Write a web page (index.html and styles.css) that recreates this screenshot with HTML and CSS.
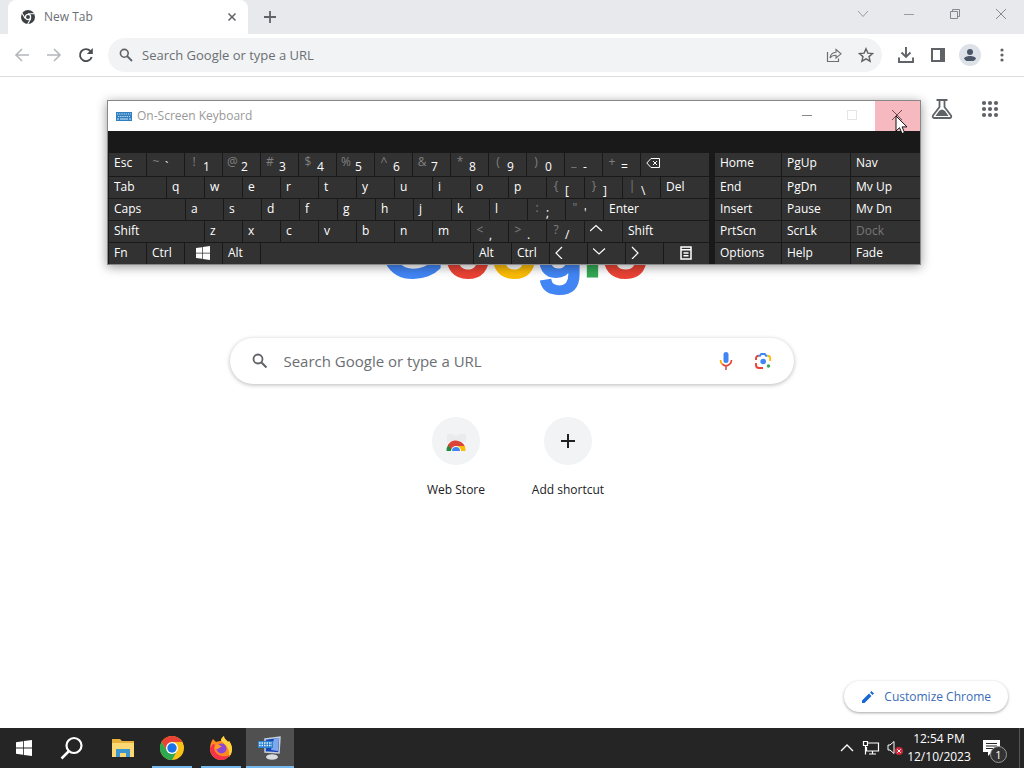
FILE: index.html
```html
<!DOCTYPE html>
<html lang="en">
<head>
    <meta charset="UTF-8">
    <meta name="viewport" content="width=device-width, initial-scale=1.0">
    <title>New Tab</title>
    <link rel="stylesheet" href="styles.css">
</head>
<body>
    <div class="browser">
        <div class="tab-strip">
            <div class="tab">
                <svg width="14" height="14" viewBox="0 0 14 14"><circle cx="7" cy="7" r="7" fill="#3c4043"/><circle cx="7" cy="7" r="2.6" fill="#3c4043" stroke="#fff" stroke-width="1.3"/><path d="M7 3.8h6.3M4.2 8.6L1.1 3.2M9.8 8.6L6.7 14" stroke="#fff" stroke-width="1.1"/></svg>
                <span class="tab-title">New Tab</span>
                <button class="icon-button tab-close" aria-label="Close tab">
                    <svg width="10" height="10" viewBox="0 0 10 10"><path d="M1.5 1.5l7 7M8.5 1.5l-7 7" stroke="#5f6368" stroke-width="1.5"/></svg>
                </button>
            </div>
            <button class="icon-button new-tab" aria-label="New tab">
                <svg width="12" height="12" viewBox="0 0 12 12"><path d="M6 0v12M0 6h12" stroke="#5f6368" stroke-width="1.8"/></svg>
            </button>
            <div class="window-buttons">
                <button class="icon-button" aria-label="Search tabs"><svg width="12" height="12" viewBox="0 0 12 12"><path d="M1 2l5 5.5L11 2" fill="none" stroke="#999ca0"/></svg></button>
                <button class="icon-button" aria-label="Minimize"><svg width="12" height="12" viewBox="0 0 12 12"><path d="M1 5.5h10" stroke="#999ca0"/></svg></button>
                <button class="icon-button" aria-label="Restore"><svg width="12" height="12" viewBox="0 0 12 12"><path d="M1.5 2.5h7v7h-7zM3.5 2.5v-2h7v7h-2" fill="none" stroke="#85888c"/></svg></button>
                <button class="icon-button" aria-label="Close"><svg width="12" height="12" viewBox="0 0 12 12"><path d="M1 0l10 10M11 0L1 10" stroke="#85888c"/></svg></button>
            </div>
        </div>

        <div class="toolbar">
            <div class="nav-buttons">
                <button class="icon-button" aria-label="Back"><svg width="16" height="16" viewBox="0 0 16 16"><path d="M15 8H2M8 2L2 8l6 6" fill="none" stroke="#b5b7ba" stroke-width="1.6"/></svg></button>
                <button class="icon-button" aria-label="Forward"><svg width="16" height="16" viewBox="0 0 16 16"><path d="M1 8h13M8 2l6 6-6 6" fill="none" stroke="#b5b7ba" stroke-width="1.6"/></svg></button>
                <button class="icon-button" aria-label="Reload"><svg width="16" height="16" viewBox="0 0 16 16"><path d="M13.7 10A6 6 0 1 1 12.4 4" fill="none" stroke="#4a4d51" stroke-width="1.9"/><path d="M14.8 1v6H8.8z" fill="#4a4d51"/></svg></button>
            </div>
            <div class="omnibox">
                <svg width="14" height="14" viewBox="0 0 14 14"><circle cx="5.3" cy="5.3" r="3.9" fill="none" stroke="#5f6368" stroke-width="1.6"/><path d="M8 8l5 5" stroke="#5f6368" stroke-width="1.8"/></svg>
                <input type="text" aria-label="Address bar" placeholder="Search Google or type a URL">
                <button class="icon-button" aria-label="Share"><svg width="16" height="16" viewBox="0 0 16 16"><path d="M1.5 5v9.5h11v-3" fill="none" stroke="#6b6f73" stroke-width="1.2"/><path d="M4 11C4.5 7.5 6.5 5.3 10 5.2V2.5L15 6.8l-5 4.2V8.3C7.5 8.3 5.5 9 4 11z" fill="none" stroke="#6b6f73" stroke-width="1.1"/></svg></button>
                <button class="icon-button" aria-label="Bookmark"><svg width="16" height="16" viewBox="0 0 16 16"><path d="M8 1.8l1.9 4.3 4.7.4-3.6 3.1 1.1 4.6L8 11.8l-4.1 2.4L5 9.6 1.4 6.5l4.7-.4z" fill="none" stroke="#5f6368" stroke-width="1.4"/></svg></button>
            </div>
            <div class="toolbar-actions">
                <button class="icon-button" aria-label="Downloads"><svg width="18" height="18" viewBox="0 0 18 18"><path d="M9 1v9M4.5 6.5L9 11l4.5-4.5M2 11.5V16h14v-4.5" fill="none" stroke="#5f6368" stroke-width="1.9"/></svg></button>
                <button class="icon-button" aria-label="Side panel"><svg width="14" height="14" viewBox="0 0 14 14"><path d="M0 0h14v14H0z" fill="#5f6368"/><path d="M2 2h7v10H2z" fill="#fff"/></svg></button>
                <button class="icon-button avatar" aria-label="Profile"><svg width="14" height="14" viewBox="0 0 14 14"><circle cx="7" cy="4" r="3" fill="#4b5568"/><path d="M1 13v-2c0-2 3-3 6-3s6 1 6 3v2z" fill="#4b5568"/></svg></button>
                <button class="icon-button" aria-label="Menu"><svg width="4" height="14" viewBox="0 0 4 14"><g fill="#5f6368"><circle cx="2" cy="2" r="1.6"/><circle cx="2" cy="7" r="1.6"/><circle cx="2" cy="12" r="1.6"/></g></svg></button>
            </div>
        </div>

        <div class="new-tab-page">
            <div class="page-tools">
                <button class="icon-button" aria-label="Labs"><svg width="22" height="22" viewBox="0 0 22 22"><path d="M5.5 2h11M8.5 2v7L2 17.5c-.8 1.3 0 2.5 1.5 2.5h15c1.5 0 2.3-1.2 1.5-2.5L13.5 9V2" fill="none" stroke="#5f6368" stroke-width="1.8"/><path d="M4.5 18l3.5-5c2-2 4-2 6 0l3.5 5z" fill="#5f6368"/></svg></button>
                <button class="icon-button" aria-label="Google apps"><svg width="18" height="18" viewBox="0 0 18 18"><g fill="#5f6368"><circle cx="3" cy="3" r="2.1"/><circle cx="9" cy="3" r="2.1"/><circle cx="15" cy="3" r="2.1"/><circle cx="3" cy="9" r="2.1"/><circle cx="9" cy="9" r="2.1"/><circle cx="15" cy="9" r="2.1"/><circle cx="3" cy="15" r="2.1"/><circle cx="9" cy="15" r="2.1"/><circle cx="15" cy="15" r="2.1"/></g></svg></button>
            </div>

            <div class="logo"><span class="blue">G</span><span class="red">o</span><span class="yellow">o</span><span class="blue">g</span><span class="green">l</span><span class="red">e</span></div>

            <div class="search-box">
                <svg width="16" height="16" viewBox="0 0 16 16"><circle cx="6" cy="6" r="4.5" fill="none" stroke="#5f6368" stroke-width="1.8"/><path d="M9.2 9.2l5.3 5.3" stroke="#5f6368" stroke-width="2"/></svg>
                <input type="text" aria-label="Search" placeholder="Search Google or type a URL">
                <button class="icon-button" aria-label="Voice search"><svg width="14" height="20" viewBox="0 0 14 20"><rect x="4.5" y="1" width="5" height="11" rx="2.5" fill="#4285f4"/><path d="M1.5 9c0 2 .8 3.3 1.8 4.2" fill="none" stroke="#f9ab00" stroke-width="1.7"/><path d="M3.3 13.2c2.2 1.9 5.2 1.9 7.4 0 1.1-1 1.8-2.3 1.8-4.2" fill="none" stroke="#ea4335" stroke-width="1.7"/><path d="M7 15v4" stroke="#c5665b" stroke-width="1.7"/></svg></button>
                <button class="icon-button" aria-label="Image search"><svg width="18" height="18" viewBox="0 0 18 18"><g fill="none" stroke-width="1.9"><path d="M2 8V6.5c0-1.8 1-2.7 2.7-2.7" stroke="#ea4335"/><path d="M4.5 3.8H6L7.2 2h3.6L12 3.8h1.5" stroke="#4285f4"/><path d="M13.5 3.8c1.8 0 2.7 1 2.7 2.7V9" stroke="#fbbc04"/><path d="M2 11v2c0 2 1 3 3 3h4" stroke="#ea4335"/></g><circle cx="9.2" cy="9.5" r="2.8" fill="#4285f4"/><circle cx="14.5" cy="14" r="1.7" fill="#34a853"/></svg></button>
            </div>

            <div class="shortcuts">
                <a class="shortcut" href="#">
                    <span class="shortcut-icon"><svg width="24" height="24" viewBox="0 0 24 24"><path d="M3 5h6l3 2 3-2h7v8H3z" fill="#e9ebed"/><path d="M2.5 22a9.5 9.5 0 0 1 3-7.5L9 19v3z" fill="#1e8e3e"/><path d="M4 16a9.5 9.5 0 0 1 17 2h-9l-5 2z" fill="#db4437"/><path d="M12 17h8.7c.6 1.3.8 3 .8 5H16z" fill="#fbbc04"/><path d="M7 22a5 5 0 0 1 10 0z" fill="#fff"/><path d="M8 22a4 4 0 0 1 8 0z" fill="#4285f4"/></svg></span>
                    <span>Web Store</span>
                </a>
                <a class="shortcut" href="#">
                    <span class="shortcut-icon"><svg width="14" height="14" viewBox="0 0 14 14"><path d="M7 0v14M0 7h14" stroke="#202124" stroke-width="2"/></svg></span>
                    <span>Add shortcut</span>
                </a>
            </div>

            <button class="customize">
                <svg width="14" height="14" viewBox="0 0 14 14"><path d="M1 10.5V13h2.5L10.5 6 8 3.5zM9 2.5L11.5 5 13 3.5 10.5 1z" fill="#1a67d2"/></svg>
                <span>Customize Chrome</span>
            </button>
        </div>
    </div>

    <div class="osk">
        <div class="osk-title">
            <svg width="16" height="9" viewBox="0 0 16 9"><path d="M0 0h16v9H0z" fill="#2f7fc0"/><path d="M1 2h14M2 4.5h12" stroke="#cfe6f7" stroke-width="1.2" stroke-dasharray="1.2 1"/><path d="M1 7h2M4 7h8M13 7h2" stroke="#cfe6f7" stroke-width="1.2"/></svg>
            <span>On-Screen Keyboard</span>
            <div class="osk-buttons">
                <button aria-label="Minimize"><svg width="12" height="12" viewBox="0 0 12 12"><path d="M0 5.5h10" stroke="#888"/></svg></button>
                <button aria-label="Maximize" disabled><svg width="12" height="12" viewBox="0 0 12 12"><path d="M.5.5h9v9h-9z" fill="none" stroke="#e4e4e4"/></svg></button>
                <button class="osk-close" aria-label="Close"><svg width="12" height="12" viewBox="0 0 12 12"><path d="M0 0l10 10M10 0L0 10" stroke="#6e4d52"/></svg></button>
            </div>
        </div>
        <div class="osk-body">
            <div class="keys">
                <div class="row">
                    <button class="key">Esc</button>
                    <button class="key dual"><i>~</i><b>`</b></button>
                    <button class="key dual"><i>!</i><b>1</b></button>
                    <button class="key dual"><i>@</i><b>2</b></button>
                    <button class="key dual"><i>#</i><b>3</b></button>
                    <button class="key dual"><i>$</i><b>4</b></button>
                    <button class="key dual"><i>%</i><b>5</b></button>
                    <button class="key dual"><i>^</i><b>6</b></button>
                    <button class="key dual"><i>&amp;</i><b>7</b></button>
                    <button class="key dual"><i>*</i><b>8</b></button>
                    <button class="key dual"><i>(</i><b>9</b></button>
                    <button class="key dual"><i>)</i><b>0</b></button>
                    <button class="key dual"><i>_</i><b>-</b></button>
                    <button class="key dual"><i>+</i><b>=</b></button>
                    <button class="key fill" aria-label="Backspace"><svg width="14" height="14" viewBox="0 0 14 14"><path d="M5 3.5h8.5v9H5L.8 8zM7 6l4 4M11 6l-4 4" fill="none" stroke="#fff"/></svg></button>
                </div>
                <div class="row">
                    <button class="key tab-key">Tab</button>
                    <button class="key">q</button>
                    <button class="key">w</button>
                    <button class="key">e</button>
                    <button class="key">r</button>
                    <button class="key">t</button>
                    <button class="key">y</button>
                    <button class="key">u</button>
                    <button class="key">i</button>
                    <button class="key">o</button>
                    <button class="key">p</button>
                    <button class="key dual"><i>{</i><b>[</b></button>
                    <button class="key dual"><i>}</i><b>]</b></button>
                    <button class="key dual"><i>|</i><b>\</b></button>
                    <button class="key fill">Del</button>
                </div>
                <div class="row">
                    <button class="key caps-key">Caps</button>
                    <button class="key">a</button>
                    <button class="key">s</button>
                    <button class="key">d</button>
                    <button class="key">f</button>
                    <button class="key">g</button>
                    <button class="key">h</button>
                    <button class="key">j</button>
                    <button class="key">k</button>
                    <button class="key">l</button>
                    <button class="key dual"><i>:</i><b>;</b></button>
                    <button class="key dual"><i>"</i><b>'</b></button>
                    <button class="key fill">Enter</button>
                </div>
                <div class="row">
                    <button class="key shift-key">Shift</button>
                    <button class="key">z</button>
                    <button class="key">x</button>
                    <button class="key">c</button>
                    <button class="key">v</button>
                    <button class="key">b</button>
                    <button class="key">n</button>
                    <button class="key">m</button>
                    <button class="key dual"><i>&lt;</i><b>,</b></button>
                    <button class="key dual"><i>&gt;</i><b>.</b></button>
                    <button class="key dual"><i>?</i><b>/</b></button>
                    <button class="key" aria-label="Up"><svg width="14" height="14" viewBox="0 0 14 14"><path d="M0 8l6-5.5L12 8" fill="none" stroke="#fff" stroke-width="1.2"/></svg></button>
                    <button class="key fill">Shift</button>
                </div>
                <div class="row">
                    <button class="key">Fn</button>
                    <button class="key">Ctrl</button>
                    <button class="key icon-key" aria-label="Windows"><svg width="14" height="14" viewBox="0 0 14 14"><path d="M0 2l6-.8v5.5H0zM6.7 1.1L14 0v6.7H6.7zM0 7.4h6v5.4L0 12zM6.7 7.4H14V14l-7.3-1z" fill="#fff"/></svg></button>
                    <button class="key">Alt</button>
                    <button class="key fill" aria-label="Space"></button>
                    <button class="key">Alt</button>
                    <button class="key">Ctrl</button>
                    <button class="key" aria-label="Left"><svg width="14" height="14" viewBox="0 0 14 14"><path d="M7 2L1 8l6 6" fill="none" stroke="#fff" stroke-width="1.2"/></svg></button>
                    <button class="key" aria-label="Down"><svg width="14" height="14" viewBox="0 0 14 14"><path d="M0 3.5L6 9l6-5.5" fill="none" stroke="#fff" stroke-width="1.2"/></svg></button>
                    <button class="key" aria-label="Right"><svg width="14" height="14" viewBox="0 0 14 14"><path d="M1 2l6 6-6 6" fill="none" stroke="#fff" stroke-width="1.2"/></svg></button>
                    <button class="key icon-key menu-key" aria-label="Menu"><svg width="12" height="14" viewBox="0 0 12 14"><path d="M1 1h10v12H1zM1 3.7h10M3.5 7h5M3.5 9.8h5" fill="none" stroke="#fff" stroke-width="1.5"/></svg></button>
                </div>
            </div>
            <div class="side-keys">
                <button class="key">Home</button>
                <button class="key">PgUp</button>
                <button class="key">Nav</button>
                <button class="key">End</button>
                <button class="key">PgDn</button>
                <button class="key">Mv Up</button>
                <button class="key">Insert</button>
                <button class="key">Pause</button>
                <button class="key">Mv Dn</button>
                <button class="key">PrtScn</button>
                <button class="key">ScrLk</button>
                <button class="key" disabled>Dock</button>
                <button class="key">Options</button>
                <button class="key">Help</button>
                <button class="key">Fade</button>
            </div>
        </div>
        <svg class="cursor" width="13" height="20" viewBox="0 0 13 20"><path d="M1 1v15l3.5-3.3L7 18.5l2.5-1-2.4-5.6H12z" fill="#fff" stroke="#111"/></svg>
    </div>

    <div class="taskbar">
        <button class="task" aria-label="Start"><svg width="16" height="16" viewBox="0 0 16 16"><path d="M0 2.2l7-1v6.3H0zM7.8 1.1L16 0v7.5H7.8zM0 8.4h7v6.4l-7-1zM7.8 8.4H16V16l-8.2-1.1z" fill="#fff"/></svg></button>
        <button class="task" aria-label="Search"><svg width="24" height="24" viewBox="0 0 24 24"><circle cx="14" cy="9.5" r="7.5" fill="none" stroke="#fff" stroke-width="2.2"/><path d="M9 15l-7.5 7.5" stroke="#fff" stroke-width="2.5"/></svg></button>
        <div class="task-apps">
            <button class="task" aria-label="File Explorer"><svg width="22" height="20" viewBox="0 0 22 20"><path d="M0 1h8l2 2h12v16H0z" fill="#e8b13c"/><path d="M0 5h22v14H0z" fill="#fbd873"/><path d="M4 11h14v8h-4v-4H8v4H4z" fill="#3c96cf"/></svg></button>
            <button class="task running" aria-label="Chrome"><svg width="24" height="24" viewBox="0 0 24 24"><circle cx="12" cy="12" r="12" fill="#fbc116"/><path d="M1.6 6A12 12 0 0 1 22.4 6H12L7 15z" fill="#ea4335"/><path d="M1.6 6a12 12 0 0 0 10.4 18l5-9-5 3-5-3z" fill="#2da94f"/><circle cx="12" cy="12" r="6" fill="#fff"/><circle cx="12" cy="12" r="4.7" fill="#1a73e8"/></svg></button>
            <button class="task running" aria-label="Firefox"><svg width="24" height="24" viewBox="0 0 24 24"><path d="M4 3l3 3c2-1 4-1 5-1 0-2 1-4 3-5 0 3 3 4 4 6l1-1c2 3 3 5 3 8 0 6-5 11-11 11S1 19 1 13c0-4 1-7 3-10z" fill="#ff8a1f"/><path d="M15 0c0 3 3 4 4 6l1-1c2 3 3 5 3 8 0 3-1 6-3 8 1-6-1-11-8-16 0-2 1-4 3-5z" fill="#ffd33d"/><path d="M1 12c0 7 5 12 11 12 4 0 7-2 9-5-6 3-15 1-16-7l2-3-3-1z" fill="#f5324b"/><circle cx="12.5" cy="12.5" r="5" fill="#8b47d8"/><path d="M6 9c3-1 5 0 7 2-3 0-3 2-5 2s-3-2-2-4z" fill="#ff9a22"/></svg></button>
            <button class="task running active" aria-label="On-Screen Keyboard"><svg width="26" height="26" viewBox="0 0 26 26"><path d="M8 4l15-2-1 16-14-1z" fill="#1746b8"/><path d="M8 4l15-2-1 16-14-1z" fill="none" stroke="#c7cfdb" stroke-width="1.5"/><path d="M17 3.5l5-.5-1 13-7-1z" fill="#7fa8ea"/><ellipse cx="15" cy="22" rx="6" ry="2.8" fill="#d9dce0"/><path d="M1 6h15v7H1z" fill="#2d82cf"/><path d="M2 8h13M2 10.5h13" stroke="#e6f3ff" stroke-width="1.3" stroke-dasharray="1.5 1"/></svg></button>
        </div>
        <div class="tray">
            <button aria-label="Show hidden icons"><svg width="14" height="14" viewBox="0 0 14 14"><path d="M1 10l6-6 6 6" fill="none" stroke="#fff" stroke-width="1.3"/></svg></button>
            <button aria-label="Network"><svg width="18" height="16" viewBox="0 0 18 16"><path d="M6 3h10.5v8H4.5V7M10.5 11v3M7 14h7M1.5 1.5h4v4h-4zM3.5 5.5v9" fill="none" stroke="#fff" stroke-width="1.2"/></svg></button>
            <button aria-label="Volume"><svg width="16" height="16" viewBox="0 0 16 16"><path d="M1 5h2l4-3.5v12L3 10H1z" fill="none" stroke="#fff"/><circle cx="12" cy="11" r="4" fill="#d1273a"/><path d="M10.3 9.3l3.4 3.4M13.7 9.3l-3.4 3.4" stroke="#fff"/></svg></button>
            <div class="clock"><span>12:54 PM</span><span>12/10/2023</span></div>
            <button class="notifications" aria-label="Notifications">
                <svg width="17" height="16" viewBox="0 0 17 16"><path d="M0 0h17v12H9l-4 4v-4H0z" fill="#fff"/><path d="M3 3.5h11M3 6h11M3 8.5h7" stroke="#252525" stroke-width="1.1"/></svg>
                <span class="badge">1</span>
            </button>
            <span class="show-desktop"></span>
        </div>
    </div>
</body>
</html>
```
FILE: styles.css
```css
* {
    box-sizing: border-box;
}

body {
    margin: 0;
    height: 100vh;
    display: flex;
    flex-direction: column;
    font-family: "Open Sans", "Noto Sans", sans-serif;
    font-size: 12px;
    color: #202124;
    background-color: #fff;
    position: relative;
    overflow: hidden;
}

button {
    display: flex;
    align-items: center;
    justify-content: center;
    margin: 0;
    padding: 0;
    border: none;
    background: none;
    font: inherit;
    color: inherit;
}

svg {
    display: block;
    flex: none;
}

input {
    flex: 1;
    min-width: 0;
    padding: 0;
    border: none;
    outline: none;
    background: none;
    font: inherit;
}

input::placeholder {
    color: #6b6f73;
    opacity: 1;
}

.icon-button {
    width: 32px;
    height: 32px;
    flex: none;
}

/* browser */
.browser {
    flex: 1;
    display: flex;
    flex-direction: column;
}

.tab-strip {
    display: flex;
    height: 34px;
    padding-left: 8px;
    background-color: #e7e9ed;
}

.tab {
    display: flex;
    align-items: center;
    width: 240px;
    padding: 0 0 0 13px;
    background-color: #fff;
    border-radius: 8px 8px 0 0;
}

.tab-title {
    flex: 1;
    margin-left: 9px;
    font-size: 12px;
    line-height: 18px;
    color: #6b6f73;
}

.new-tab {
    margin-left: 6px;
    height: 34px;
}

.window-buttons {
    display: flex;
    margin-left: auto;
}

.window-buttons .icon-button {
    width: 46px;
    height: 30px;
}

.toolbar {
    display: flex;
    align-items: center;
    height: 43px;
    padding: 0 6px;
    border-bottom: 1px solid #dadce0;
}

.nav-buttons,
.toolbar-actions {
    display: flex;
}

.omnibox {
    flex: 1;
    display: flex;
    align-items: center;
    height: 34px;
    margin: 0 8px 0 6px;
    padding-left: 11px;
    border-radius: 17px;
    background-color: #f1f3f4;
    font-size: 13px;
}

.omnibox input {
    margin-left: 9px;
}

.avatar svg {
    box-sizing: content-box;
    padding: 4px;
    border-radius: 50%;
    background-color: #dde1e8;
}

/* new tab page */
.new-tab-page {
    flex: 1;
    display: flex;
    flex-direction: column;
    align-items: center;
}

.page-tools {
    align-self: flex-end;
    display: flex;
    gap: 16px;
    margin: 16px 18px 0 0;
}

.logo {
    height: 92px;
    margin-top: 77px;
    padding-left: 4px;
    font-family: "Liberation Sans", Arial, sans-serif;
    font-size: 83px;
    line-height: 92px;
    -webkit-text-stroke-width: 4px;
}

.blue {
    color: #4285f4;
}

.red {
    color: #ea4335;
}

.yellow {
    color: #fbbc05;
}

.green {
    color: #34a853;
}

.search-box {
    display: flex;
    align-items: center;
    width: 55%;
    height: 46px;
    margin-top: 44px;
    padding: 0 12px 0 22px;
    border-radius: 23px;
    box-shadow: 0 1px 4px rgba(32, 33, 36, 0.32);
    font-size: 15px;
}

.search-box input {
    margin-left: 15px;
}

.search-box .icon-button {
    width: 37px;
}

.shortcuts {
    display: flex;
    margin-top: 33px;
}

.shortcut {
    display: flex;
    flex-direction: column;
    align-items: center;
    gap: 17px;
    width: 112px;
    line-height: 16px;
    color: #202124;
    text-decoration: none;
}

.shortcut-icon {
    display: flex;
    align-items: center;
    justify-content: center;
    width: 48px;
    height: 48px;
    border-radius: 50%;
    background-color: #f1f3f4;
}

.customize {
    align-self: flex-end;
    gap: 9px;
    height: 31px;
    margin: auto 16px 16px 0;
    padding: 0 17px;
    border-radius: 16px;
    background-color: #fff;
    box-shadow: 0 1px 3px rgba(32, 33, 36, 0.4);
    font-size: 12px;
    line-height: 18px;
    color: #3a6cb8;
}

/* on-screen keyboard window */
.osk {
    position: absolute;
    top: 100px;
    left: 107px;
    width: 814px;
    border: 1px solid #888;
    background-color: #191919;
    box-shadow: 0 2px 10px rgba(0, 0, 0, 0.4);
    color: #fff;
}

.osk-title {
    display: flex;
    align-items: center;
    height: 30px;
    padding-left: 8px;
    background-color: #fff;
    color: #999;
}

.osk-title span {
    margin-left: 5px;
    line-height: 16px;
}

.osk-buttons {
    display: flex;
    align-self: stretch;
    margin-left: auto;
}

.osk-buttons button {
    width: 45px;
}

.osk-buttons .osk-close {
    background-color: #f7b9c0;
}

.osk-body {
    display: flex;
    gap: 6px;
    padding: 22px 0 0 1px;
}

.keys {
    flex: 1;
    display: flex;
    flex-direction: column;
    gap: 1px;
}

.row {
    display: flex;
    gap: 1px;
}

.key {
    align-items: flex-start;
    justify-content: flex-start;
    width: 37px;
    height: 21px;
    padding: 2px 5px;
    background-color: #323232;
    line-height: 16px;
    white-space: nowrap;
}

.row:first-child .key,
.side-keys .key:nth-child(-n+3) {
    height: 23px;
}

.key:disabled {
    color: #777;
}

.key.dual {
    gap: 4px;
    padding: 1px 4px;
}

.dual i {
    width: 10px;
    font-style: normal;
    color: #808080;
}

.dual b {
    font-weight: normal;
    padding-top: 5px;
}

.fill {
    flex: 1;
}

.tab-key {
    width: 57px;
}

.caps-key {
    width: 76px;
}

.shift-key {
    width: 95px;
}

.menu-key {
    width: 45px;
}

.key.icon-key {
    align-items: center;
    justify-content: center;
    padding: 0 2px 2px 0;
}

.side-keys {
    display: grid;
    grid-template-columns: 66px 68px 69px;
    gap: 1px;
}

.side-keys .key {
    width: auto;
}

.cursor {
    position: absolute;
    top: 14px;
    right: 12px;
}

/* taskbar */
.taskbar {
    display: flex;
    height: 40px;
    background-color: #252525;
    color: #fff;
}

.task {
    width: 48px;
    height: 40px;
}

.task-apps {
    display: flex;
    gap: 1px;
    margin-left: 3px;
}

.running {
    background: linear-gradient(#76b9ed, #76b9ed) center bottom / 40px 2px no-repeat;
}

.active {
    background-color: #505050;
    background-size: 48px 2px;
}

.tray {
    display: flex;
    align-items: center;
    margin-left: auto;
}

.tray button {
    width: 24px;
    height: 40px;
}

.clock {
    display: flex;
    flex-direction: column;
    align-items: center;
    width: 64px;
    line-height: 18px;
}

.tray .notifications {
    position: relative;
    width: 40px;
}

.badge {
    position: absolute;
    right: 4px;
    bottom: 5px;
    width: 17px;
    height: 17px;
    border: 1px solid #999;
    border-radius: 50%;
    background-color: #333;
    font-size: 11px;
    line-height: 15px;
    text-align: center;
}

.show-desktop {
    width: 9px;
    height: 40px;
    border-right: 1px solid #555;
    margin-right: 4px;
}
```
